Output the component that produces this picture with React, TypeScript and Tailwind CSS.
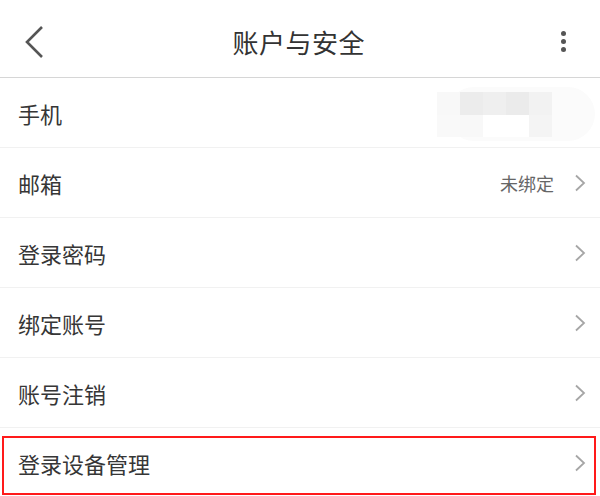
import type { ReactElement } from "react";

const rows = [
	{ label: "手机", value: null, masked: true, arrow: false },
	{ label: "邮箱", value: "未绑定", masked: false, arrow: true },
	{ label: "登录密码", value: null, masked: false, arrow: true },
	{ label: "绑定账号", value: null, masked: false, arrow: true },
	{ label: "账号注销", value: null, masked: false, arrow: true },
	{ label: "登录设备管理", value: null, masked: false, arrow: true },
];

function Chevron(): ReactElement {
	return (
		<svg width="12" height="18" viewBox="0 0 12 18" fill="none">
			<path d="M2 1.5 L10 9 L2 16.5" stroke="#a6a6a6" strokeWidth="1.8" />
		</svg>
	);
}

// blurred phone number (mosaic)
function MaskedValue(): ReactElement {
	const top = ["#f8f8f8", "#ececec", "#efefef", "#ebebeb", "#f2f2f2"];
	const bottom = ["#f9f9f9", "#f8f8f8", "#ffffff", "#ffffff", "#f4f4f4"];
	return (
		<svg width="160" height="54" viewBox="0 0 160 54" className="-mr-[11px] mt-[2px]">
			<rect x="10" y="0" width="148" height="54" rx="27" fill="#fbfbfb" />
			{top.map((c, i) => (
				<rect key={`t${i}`} x={i * 23} y="5" width="23" height="23" fill={c} />
			))}
			{bottom.map((c, i) => (
				<rect key={`b${i}`} x={i * 23} y="28" width="23" height="22" fill={c} />
			))}
		</svg>
	);
}

export default function App(): ReactElement {
	return (
		<div
			className="h-[496px] w-[600px] overflow-hidden bg-white text-[#333]"
			style={{ fontFamily: '"Noto Sans CJK SC", "Noto Sans", sans-serif' }}
		>
			<header className="flex h-[78px] items-center justify-between border-b border-[#d6d6d6] px-[24px] pt-[6px]">
				<svg width="22" height="34" viewBox="0 0 22 34" fill="none">
					<path d="M18 2 L3 17 L18 32" stroke="#555" strokeWidth="2.6" />
				</svg>
				<h1 className="mr-[10px] text-[26px] leading-none tracking-[0.5px] text-[#333]">账户与安全</h1>
				<div className="flex flex-col items-center gap-[3.5px] pr-[10px]">
					<span className="h-[4.5px] w-[4.5px] rounded-full bg-[#555]" />
					<span className="h-[4.5px] w-[4.5px] rounded-full bg-[#555]" />
					<span className="h-[4.5px] w-[4.5px] rounded-full bg-[#555]" />
				</div>
			</header>
			<ul>
				{rows.map((row, i) => (
					<li
						key={row.label}
						className={`relative flex h-[70px] items-center justify-between pl-[18px] pr-[14px] ${
							i < rows.length - 1 ? "border-b border-[#f1f1f1]" : ""
						}`}
					>
						<span className="text-[22px] leading-none text-[#363636]">{row.label}</span>
						<div className="flex items-center gap-[20px]">
							{row.value && <span className="text-[18px] leading-none text-[#666]">{row.value}</span>}
							{row.masked && <MaskedValue />}
							{row.arrow && <Chevron />}
						</div>
						{i === rows.length - 1 && (
							<div className="pointer-events-none absolute top-[8px] right-[4px] bottom-[3px] left-[2px] border-2 border-[#ff1a1a]" />
						)}
					</li>
				))}
			</ul>
		</div>
	);
}
